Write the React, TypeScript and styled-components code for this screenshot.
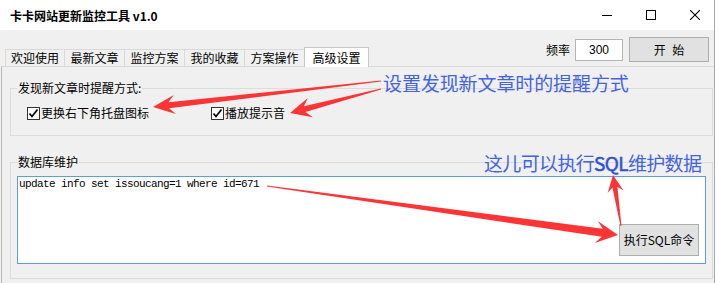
import React from "react";
import styled, { createGlobalStyle } from "styled-components";

const Global = createGlobalStyle`
  html, body { margin: 0; padding: 0; background: #ffffff; }
  body { font-family: "Noto Sans CJK SC", "Noto Sans", sans-serif; font-size: 12px; color: #000; }
  * { box-sizing: border-box; }
`;

const Window = styled.div`
  position: relative;
  width: 715px;
  height: 283px;
  border-right: 1px solid #a9a9a9;
  display: flex;
  flex-direction: column;
  overflow: hidden;
`;

const TitleBar = styled.div`
  height: 30px;
  flex: none;
  background: #ffffff;
  display: flex;
  align-items: center;
  padding-left: 10px;
`;

const TitleText = styled.span`
  font-size: 12px;
  font-weight: bold;
  line-height: 16px;
  padding-top: 2px;
`;

const Caption = styled.div`
  margin-left: auto;
  display: flex;
  align-items: center;
  gap: 34px;
  padding-right: 14px;
`;

const CaptionIcon = styled.svg`
  width: 10px;
  height: 10px;
  display: block;
`;

const Body = styled.div`
  flex: 1;
  background: #f0f0f0;
  display: flex;
  flex-direction: column;
`;

const TopRow = styled.div`
  height: 36px;
  flex: none;
  display: flex;
  align-items: flex-end;
  padding-left: 5px;
`;

const Tabs = styled.div`
  display: flex;
  align-items: flex-end;
`;

const Tab = styled.div<{ $active?: boolean; $w: number }>`
  position: relative;
  z-index: ${(p) => (p.$active ? 2 : 1)};
  width: ${(p) => p.$w}px;
  margin-left: -1px;
  &:first-child { margin-left: 0; }
  border: 1px solid ${(p) => (p.$active ? "#c8c8c8" : "#d9d9d9")};
  border-bottom: none;
  background: ${(p) => (p.$active ? "#ffffff" : "#f0f0f0")};
  padding: ${(p) => (p.$active ? "2px 0 1px" : "0")};
  margin-bottom: ${(p) => (p.$active ? "-1px" : "0")};
  line-height: 16px;
  font-size: 12px;
  text-align: center;
  white-space: nowrap;
`;

const RightTools = styled.div`
  margin-left: auto;
  align-self: flex-start;
  margin-top: 7px;
  margin-right: 5px;
  display: flex;
  align-items: center;
`;

const ToolLabel = styled.span`
  line-height: 16px;
  margin-right: 5px;
`;

const NumberBox = styled.div`
  width: 48px;
  height: 22px;
  border: 1px solid #b4b4b4;
  background: #fff;
  display: flex;
  align-items: center;
  justify-content: center;
  font-family: "Liberation Sans", Arial, sans-serif;
  font-size: 12px;
  margin-right: 6px;
`;

const PushButton = styled.div<{ $w: number; $h: number }>`
  width: ${(p) => p.$w}px;
  height: ${(p) => p.$h}px;
  border: 1px solid #adadad;
  background: #e1e1e1;
  display: flex;
  align-items: center;
  justify-content: center;
  font-size: 12px;
  line-height: 16px;
  white-space: pre;
`;

const StartButton = styled(PushButton)`
  word-spacing: 4px;
`;

const Panel = styled.div`
  flex: 1;
  margin-left: 1px;
  border-left: 1px solid #b9b9b9;
  border-top: 1px solid #d9d9d9;
  padding: 0 1px 0 8px;
  display: flex;
  flex-direction: column;
`;

const Group = styled.fieldset<{ $top: number }>`
  margin: ${(p) => p.$top}px 0 0 0;
  padding: 0 6px;
  border: 1px solid #dcdcdc;
  min-width: 0;
`;

const Legend = styled.legend`
  padding: 0 1px;
  line-height: 16px;
  font-size: 12px;
`;

const CheckRow = styled.div`
  display: flex;
  gap: 62px;
  padding: 10px 0 15px 10px;
`;

const CheckItem = styled.label`
  display: flex;
  align-items: center;
  gap: 1px;
  line-height: 14px;
  height: 14px;
`;

const CheckBox = styled.span`
  width: 13px;
  height: 13px;
  border: 1px solid #333;
  background: #fff;
  display: inline-flex;
  align-items: center;
  justify-content: center;
`;

const EditorWrap = styled.div`
  position: relative;
  margin: 6px 0 14px;
`;

const SqlBox = styled.div`
  height: 88px;
  border: 1px solid #5a9fe6;
  background: #fff;
  padding: 1px 1px;
  font-family: "Liberation Mono", "DejaVu Sans Mono", monospace;
  font-size: 11px;
  letter-spacing: -0.6px;
  line-height: 13px;
  white-space: pre;
`;

const RunButton = styled(PushButton)`
  position: absolute;
  right: 7px;
  top: 48px;
`;

const Note = styled.div<{ $x: number; $y: number; $ls: number }>`
  position: absolute;
  left: ${(p) => p.$x}px;
  top: ${(p) => p.$y}px;
  font-family: "Noto Sans CJK SC", sans-serif;
  font-size: 19px;
  line-height: 19px;
  color: #4363e6;
  white-space: nowrap;
  letter-spacing: ${(p) => p.$ls}px;
`;

const Strong = styled.span`
  color: #2f4fd8;
  -webkit-text-stroke: 0.5px #2f4fd8;
`;

const ArrowLayer = styled.svg`
  position: absolute;
  left: 0;
  top: 0;
  width: 719px;
  height: 283px;
  pointer-events: none;
`;

type P = [number, number];

function arrowPoints(tail: P, tip: P, headLen: number, headHalf: number, shaftHalf: number, tailHalf = 0.5): string {
  const dx = tip[0] - tail[0];
  const dy = tip[1] - tail[1];
  const L = Math.hypot(dx, dy);
  const ux = dx / L;
  const uy = dy / L;
  const nx = -uy;
  const ny = ux;
  const base: P = [tip[0] - ux * headLen, tip[1] - uy * headLen];
  const inner: P = [tip[0] - ux * headLen * 0.72, tip[1] - uy * headLen * 0.72];
  const pts: P[] = [
    [tail[0] + nx * tailHalf, tail[1] + ny * tailHalf],
    [inner[0] + nx * shaftHalf, inner[1] + ny * shaftHalf],
    [base[0] + nx * headHalf, base[1] + ny * headHalf],
    tip,
    [base[0] - nx * headHalf, base[1] - ny * headHalf],
    [inner[0] - nx * shaftHalf, inner[1] - ny * shaftHalf],
    [tail[0] - nx * tailHalf, tail[1] - ny * tailHalf],
  ];
  return pts.map((p) => `${p[0].toFixed(1)},${p[1].toFixed(1)}`).join(" ");
}

const arrows = [
  arrowPoints([381, 81], [153, 107], 22, 9.5, 3),
  arrowPoints([381, 89], [290, 113], 21, 10, 3),
  arrowPoints([267, 186], [618, 235], 22, 11, 4),
  arrowPoints([621, 226], [613, 175], 17, 8, 2.5),
];

const Check = () => (
  <svg width="11" height="11" viewBox="0 0 11 11">
    <polyline points="1.5,5.5 4,8.5 9.5,1.5" fill="none" stroke="#000" strokeWidth="1.7" />
  </svg>
);

const tabs = ["欢迎使用", "最新文章", "监控方案", "我的收藏", "方案操作", "高级设置"];

export default function App() {
  return (
    <>
      <Global />
      <Window>
        <TitleBar>
          <TitleText>卡卡网站更新监控工具 v1.0</TitleText>
          <Caption>
            <CaptionIcon viewBox="0 0 10 10">
              <line x1="0" y1="5.5" x2="10" y2="5.5" stroke="#000" strokeWidth="1" />
            </CaptionIcon>
            <CaptionIcon viewBox="0 0 10 10">
              <rect x="0.5" y="0.5" width="9" height="9" fill="none" stroke="#000" strokeWidth="1" />
            </CaptionIcon>
            <CaptionIcon viewBox="0 0 10 10">
              <path d="M0 0 L10 10 M10 0 L0 10" stroke="#000" strokeWidth="1.1" />
            </CaptionIcon>
          </Caption>
        </TitleBar>
        <Body>
          <TopRow>
            <Tabs>
              {tabs.map((t, i) => {
                const active = i === tabs.length - 1;
                const w = active ? 65 : i === 0 ? 60 : 61;
                return (
                  <Tab key={t} $active={active} $w={w}>
                    {t}
                  </Tab>
                );
              })}
            </Tabs>
            <RightTools>
              <ToolLabel>频率</ToolLabel>
              <NumberBox>300</NumberBox>
              <StartButton $w={80} $h={25}>开 始</StartButton>
            </RightTools>
          </TopRow>
          <Panel>
            <Group $top={13}>
              <Legend>发现新文章时提醒方式:</Legend>
              <CheckRow>
                <CheckItem>
                  <CheckBox>
                    <Check />
                  </CheckBox>
                  更换右下角托盘图标
                </CheckItem>
                <CheckItem>
                  <CheckBox>
                    <Check />
                  </CheckBox>
                  播放提示音
                </CheckItem>
              </CheckRow>
            </Group>
            <Group $top={18}>
              <Legend>数据库维护</Legend>
              <EditorWrap>
                <SqlBox>update info set issoucang=1 where id=671</SqlBox>
                <RunButton $w={80} $h={32}>执行SQL命令</RunButton>
              </EditorWrap>
            </Group>
          </Panel>
        </Body>
        <Note $x={383} $y={73} $ls={-0.1}>设置发现新文章时的提醒方式</Note>
        <Note $x={484} $y={153} $ls={-0.65}>
          这儿可以执行<Strong>SQL</Strong>维护数据
        </Note>
        <ArrowLayer viewBox="0 0 719 283">
          {arrows.map((p, i) => (
            <polygon key={i} points={p} fill="#fb3535" />
          ))}
        </ArrowLayer>
      </Window>
    </>
  );
}
